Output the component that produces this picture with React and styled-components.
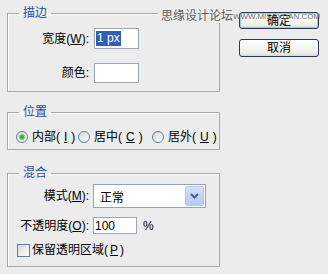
import React from "react";
import styled, { createGlobalStyle } from "styled-components";

const GlobalStyle = createGlobalStyle`
  html, body {
    margin: 0;
    padding: 0;
    background: #ececec;
  }
  body {
    font-family: "Liberation Sans", "Noto Sans CJK SC", sans-serif;
    font-size: 12px;
    color: #000;
  }
`;

//
// * Ventana del diálogo: columna de grupos + columna de botones
//
const Dialog = styled.div`
  position: relative;
  display: flex;
  width: 328px;
  height: 274px;
  padding: 6px 0 0 7px;
  box-sizing: border-box;
`;

const Column = styled.div`
  display: flex;
  flex-direction: column;
  width: 213px;
`;

const Group = styled.fieldset`
  margin: ${(p) => p.$top || 0}px 0 0 0;
  padding: ${(p) => p.$pad};
  border: 1px solid #a9a9a9;
  box-shadow: inset 1px 1px 0 #fff;
  min-width: 0;
`;

const Legend = styled.legend`
  margin-left: 11px;
  padding: 0 4px;
  line-height: 14px;
  height: 14px;
  color: #1f4f9e;
`;

const Form = styled.div`
  display: grid;
  grid-template-columns: 81px auto;
  column-gap: ${(p) => p.$gap || 5}px;
  row-gap: ${(p) => p.$rows}px;
  align-items: center;
`;

const Label = styled.label`
  text-align: right;
  line-height: 14px;
  white-space: nowrap;
`;

const Inline = styled.div`
  display: flex;
  align-items: center;
`;

const TextBox = styled.div`
  width: ${(p) => p.$w}px;
  height: ${(p) => p.$h}px;
  box-sizing: border-box;
  border: 1px solid #9aa6b4;
  background: #fff;
  display: flex;
  align-items: center;
  padding-left: 1px;
  font-size: 12px;
`;

const Selected = styled.span`
  background: #2f5fb3;
  color: #fff;
  padding: 1px 1px;
  line-height: 13px;
`;

const Unit = styled.span`
  margin-left: 6px;
`;

const Select = styled.div`
  width: 113px;
  height: 24px;
  box-sizing: border-box;
  border: 1px solid #8ea5bf;
  background: #fff;
  display: flex;
  align-items: stretch;
`;

const SelectValue = styled.span`
  flex: 1;
  display: flex;
  align-items: center;
  padding-left: 6px;
`;

const SelectArrow = styled.span`
  width: 17px;
  margin: 1px;
  background: linear-gradient(180deg, #d4e0fb, #b5c9f4);
  border: 1px solid #b7c9ef;
  border-radius: 2px;
  display: flex;
  align-items: center;
  justify-content: center;
`;

const RadioRow = styled.div`
  display: grid;
  grid-template-columns: 62px 74px auto;
  padding-left: 8px;
`;

const Option = styled.label`
  display: flex;
  align-items: center;
  gap: ${(p) => p.$gap || 4}px;
  line-height: 14px;
  white-space: nowrap;
`;

const Radio = styled.span`
  width: 12px;
  height: 12px;
  box-sizing: border-box;
  border-radius: 50%;
  border: 1px solid #5a7ea5;
  background: linear-gradient(135deg, #d8d8d0, #ffffff);
  display: flex;
  align-items: center;
  justify-content: center;
  &::after {
    content: "";
    display: ${(p) => (p.$on ? "block" : "none")};
    width: 4px;
    height: 4px;
    border-radius: 50%;
    background: #3aa83a;
    box-shadow: 0 0 0 1px #7ccf7c;
  }
`;

const Check = styled.span`
  width: 13px;
  height: 13px;
  box-sizing: border-box;
  border: 1px solid #5a7ea5;
  background: linear-gradient(135deg, #d8d8d0, #ffffff);
`;

const CheckRow = styled.div`
  grid-column: 1 / 3;
  padding-left: 9px;
`;

const Buttons = styled.div`
  display: flex;
  flex-direction: column;
  gap: 10px;
  margin-left: 19px;
  padding-top: 6px;
`;

const Button = styled.button`
  width: 80px;
  height: ${(p) => p.$h}px;
  padding: 0;
  font: inherit;
  line-height: 14px;
  color: #000;
  border: 1px solid #253a5c;
  border-radius: 3px;
  background: linear-gradient(180deg, #ffffff, #f0f0ea 80%, #d8d6cc);
  box-shadow: ${(p) => (p.$default ? "inset 0 0 0 1px #a9c1ee" : "none")};
`;

const Watermark = styled.div`
  position: absolute;
  left: 158px;
  top: 7px;
  height: 16px;
  padding: 0 3px;
  background: #ececec;
  color: #5e5e5e;
  line-height: 16px;
  font-family: "Noto Sans CJK SC", sans-serif;
  z-index: 1;
`;

const WatermarkUrl = styled.div`
  position: absolute;
  left: 233px;
  top: 12px;
  font-size: 8px;
  line-height: 9px;
  color: #6f6f6f;
  z-index: 2;
`;

function Chevron() {
  return (
    <svg width="9" height="6" viewBox="0 0 9 6">
      <path d="M1 1l3.5 3.5L8 1" fill="none" stroke="#4a5d86" strokeWidth="2" />
    </svg>
  );
}

export default function App() {
  return (
    <>
      <GlobalStyle />
      <Dialog>
        <Column>
          <Group $pad="8px 0 8px 0">
            <Legend>描边</Legend>
            <Form $rows={14}>
              <Label>
                宽度(<u>W</u>):
              </Label>
              <TextBox $w={45} $h={21}>
                <Selected>1 px</Selected>
              </TextBox>
              <Label>颜色:</Label>
              <TextBox $w={45} $h={20} />
            </Form>
          </Group>

          <Group $top={13} $pad="11px 0 5px 0">
            <Legend>位置</Legend>
            <RadioRow>
              <Option>
                <Radio $on />
                内部(<u>I</u>)
              </Option>
              <Option>
                <Radio />
                居中(<u>C</u>)
              </Option>
              <Option>
                <Radio />
                居外(<u>U</u>)
              </Option>
            </RadioRow>
          </Group>

          <Group $top={16} $pad="4px 0 9px 0">
            <Legend>混合</Legend>
            <Form $rows={9} $gap={4}>
              <Label>
                模式(<u>M</u>):
              </Label>
              <Select>
                <SelectValue>正常</SelectValue>
                <SelectArrow>
                  <Chevron />
                </SelectArrow>
              </Select>
              <Label>
                不透明度(<u>O</u>):
              </Label>
              <Inline>
                <TextBox $w={44} $h={17}>
                  100
                </TextBox>
                <Unit>%</Unit>
              </Inline>
              <CheckRow>
                <Option $gap={2}>
                  <Check />
                  保留透明区域(<u>P</u>)
                </Option>
              </CheckRow>
            </Form>
          </Group>
        </Column>

        <Buttons>
          <Button $h={17} $default>
            确定
          </Button>
          <Button $h={18}>取消</Button>
        </Buttons>

        <Watermark>思缘设计论坛</Watermark>
        <WatermarkUrl>WWW.MISSYUAN.COM</WatermarkUrl>
      </Dialog>
    </>
  );
}
